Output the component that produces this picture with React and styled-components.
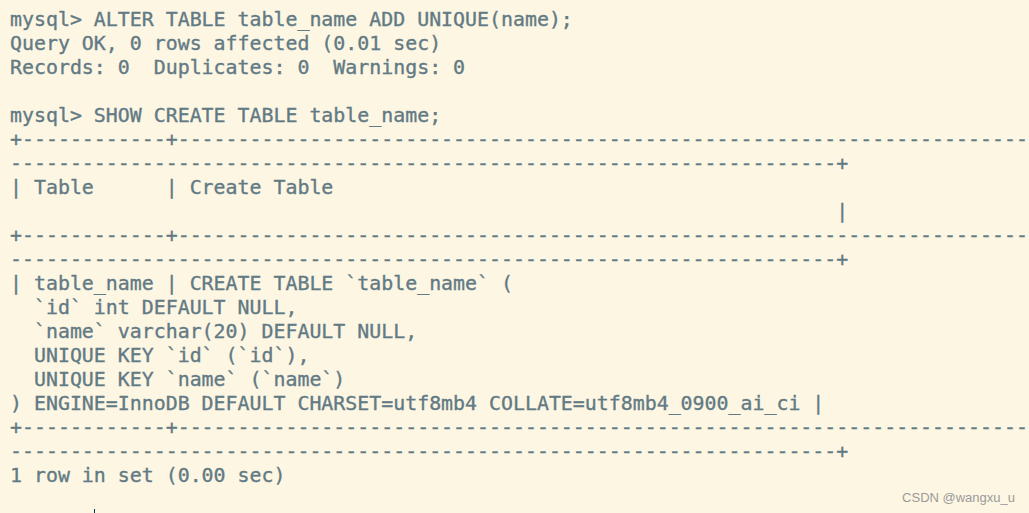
import React from 'react'
import styled, { createGlobalStyle } from 'styled-components'

const GlobalStyle = createGlobalStyle`
  html, body {
    margin: 0;
    padding: 0;
    background: #fdf6e3;
  }
`

const StyleTerminalDiv = styled.div`
  position: relative;
  width: 1029px;
  height: 513px;
  overflow: hidden;
  background: #fdf6e3;
  box-sizing: border-box;
  padding: 8px 0 0 10px;
`

const StyleScreenPre = styled.pre`
  margin: 0;
  font-family: "DejaVu Sans Mono", "Liberation Mono", monospace;
  font-size: 19.9px;
  line-height: 24px;
  color: #627a84;
  -webkit-text-stroke: 0.35px #627a84;
  white-space: pre;
`

const StyleWatermarkSpan = styled.span`
  position: absolute;
  right: 14px;
  bottom: 8px;
  font-family: "Liberation Sans", Arial, sans-serif;
  font-size: 13px;
  color: #9a9a9a;
`

const StyleCursorSpan = styled.span`
  position: absolute;
  left: 94px;
  top: 509px;
  width: 1px;
  height: 4px;
  background: #073642;
`

const COLS = 156

const content = [
  'CREATE TABLE `table_name` (',
  '  `id` int DEFAULT NULL,',
  '  `name` varchar(20) DEFAULT NULL,',
  '  UNIQUE KEY `id` (`id`),',
  '  UNIQUE KEY `name` (`name`)',
  ') ENGINE=InnoDB DEFAULT CHARSET=utf8mb4 COLLATE=utf8mb4_0900_ai_ci',
].join('\n')

// mysql pads on the raw length, newlines included
const border = '+' + '-'.repeat(12) + '+' + '-'.repeat(content.length + 2) + '+'
const header = '| Table      | ' + 'Create Table'.padEnd(content.length) + ' |'

// hard wrap at terminal width
const wrap = (line) => {
  const out = []
  for (let i = 0; i < line.length; i += COLS) out.push(line.slice(i, i + COLS))
  return out
}

const lines = [
  'mysql> ALTER TABLE table_name ADD UNIQUE(name);',
  'Query OK, 0 rows affected (0.01 sec)',
  'Records: 0  Duplicates: 0  Warnings: 0',
  '',
  'mysql> SHOW CREATE TABLE table_name;',
  ...wrap(border),
  ...wrap(header),
  ...wrap(border),
  ...('| table_name | ' + content + ' |').split('\n'),
  ...wrap(border),
  '1 row in set (0.00 sec)',
]

const App = () => {
  return (
    <>
      <GlobalStyle />
      <StyleTerminalDiv>
        <StyleScreenPre>{lines.join('\n')}</StyleScreenPre>
        <StyleCursorSpan />
        <StyleWatermarkSpan>CSDN @wangxu_u</StyleWatermarkSpan>
      </StyleTerminalDiv>
    </>
  )
}

export default App
